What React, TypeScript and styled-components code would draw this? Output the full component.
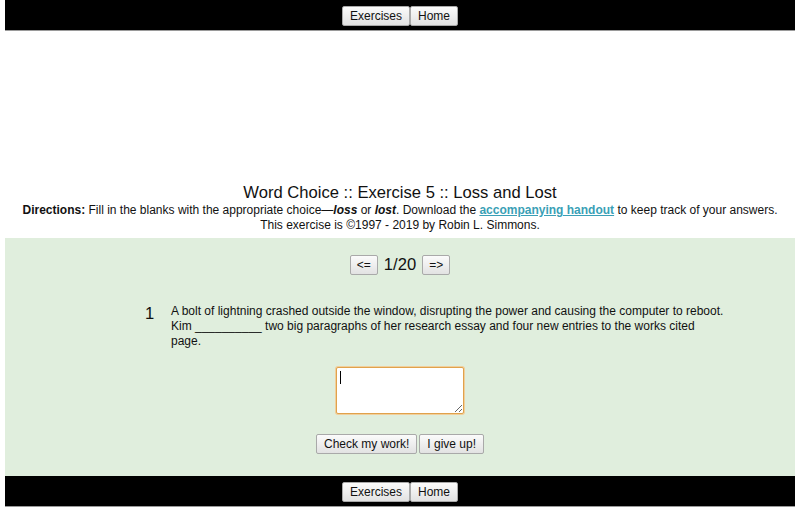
import React from 'react'
import styled, { createGlobalStyle } from 'styled-components'

const GlobalStyle = createGlobalStyle`
  body {
    margin: 0;
    background: #ffffff;
    font-family: 'Liberation Sans', Arial, sans-serif;
    color: #111;
  }
`

const Page = styled.div`
  padding: 0 5px;
`

const NavBar = styled.div`
  display: flex;
  justify-content: center;
  align-items: center;
  box-sizing: border-box;
  height: 31px;
  padding-top: 2px;
  background: #000;
  border-bottom: 1px solid #9a9a9a;
`

const Btn = styled.button<{ $pad?: number }>`
  height: 20px;
  padding: 0 ${(p) => p.$pad ?? 7}px;
  margin: 0;
  font-family: 'Liberation Sans', Arial, sans-serif;
  font-size: 12px;
  color: #111;
  background: linear-gradient(#fbfbfb, #e2e2e2);
  border: 1px solid #a9a9a9;
  border-radius: 2px;
  cursor: pointer;
`

const ButtonGroup = styled.div<{ $gap?: number }>`
  display: flex;
  align-items: center;
  justify-content: center;
  gap: ${(p) => p.$gap ?? 0}px;
`

const AdSpace = styled.div`
  height: 152px;
`

const Header = styled.div`
  text-align: center;
`

const Title = styled.div`
  font-size: 16.6px;
  line-height: 20px;
`

const Line = styled.div`
  font-size: 12px;
  line-height: 15px;
`

const HandoutLink = styled.a`
  color: #3a9fb6;
  font-weight: bold;
  text-decoration: underline;
`

const Panel = styled.div`
  margin-top: 5px;
  background: #e0eedd;
  padding: 17px 0 22px;
`

const Counter = styled.span`
  font-size: 16.6px;
  margin: 0 6px;
`

const QuestionRow = styled.div`
  display: flex;
  margin-top: 29px;
  padding-left: 140px;
`

const Number = styled.div`
  width: 26px;
  font-size: 16.6px;
  line-height: 20px;
`

const QuestionText = styled.div`
  width: 554px;
  font-size: 12px;
  line-height: 15px;
`

const AnswerWrap = styled.div`
  position: relative;
  width: 128px;
  margin: 18px auto 0;
`

const Answer = styled.textarea`
  display: block;
  box-sizing: border-box;
  width: 128px;
  height: 47px;
  margin: 0;
  border: 1px solid #e0a24c;
  box-shadow: 0 0 0 1px #f0cf9c;
  border-radius: 2px;
  background: #fff;
  outline: none;
`

const Caret = styled.span`
  position: absolute;
  left: 4px;
  top: 4px;
  width: 1px;
  height: 13px;
  background: #000;
`

const Actions = styled(ButtonGroup)`
  margin-top: 20px;
`

export default function App() {
  return (
    <Page>
      <GlobalStyle />
      <NavBar>
        <ButtonGroup>
          <Btn>Exercises</Btn>
          <Btn>Home</Btn>
        </ButtonGroup>
      </NavBar>
      <AdSpace />
      <Header>
        <Title>Word Choice :: Exercise 5 :: Loss and Lost</Title>
        <Line>
          <b>Directions:</b> Fill in the blanks with the appropriate choice—
          <b>
            <i>loss</i>
          </b>{' '}
          or{' '}
          <b>
            <i>lost</i>
          </b>
          . Download the <HandoutLink href="#">accompanying handout</HandoutLink> to keep
          track of your answers.
        </Line>
        <Line>This exercise is ©1997 - 2019 by Robin L. Simmons.</Line>
      </Header>
      <Panel>
        <ButtonGroup>
          <Btn $pad={6}>&lt;=</Btn>
          <Counter>1/20</Counter>
          <Btn $pad={6}>=&gt;</Btn>
        </ButtonGroup>
        <QuestionRow>
          <Number>1</Number>
          <QuestionText>
            A bolt of lightning crashed outside the window, disrupting the power and causing the
            computer to reboot. Kim __________ two big paragraphs of her research essay and four new
            entries to the works cited page.
          </QuestionText>
        </QuestionRow>
        <AnswerWrap>
          <Answer />
          <Caret />
        </AnswerWrap>
        <Actions $gap={2}>
          <Btn>Check my work!</Btn>
          <Btn>I give up!</Btn>
        </Actions>
      </Panel>
      <NavBar>
        <ButtonGroup>
          <Btn>Exercises</Btn>
          <Btn>Home</Btn>
        </ButtonGroup>
      </NavBar>
    </Page>
  )
}
